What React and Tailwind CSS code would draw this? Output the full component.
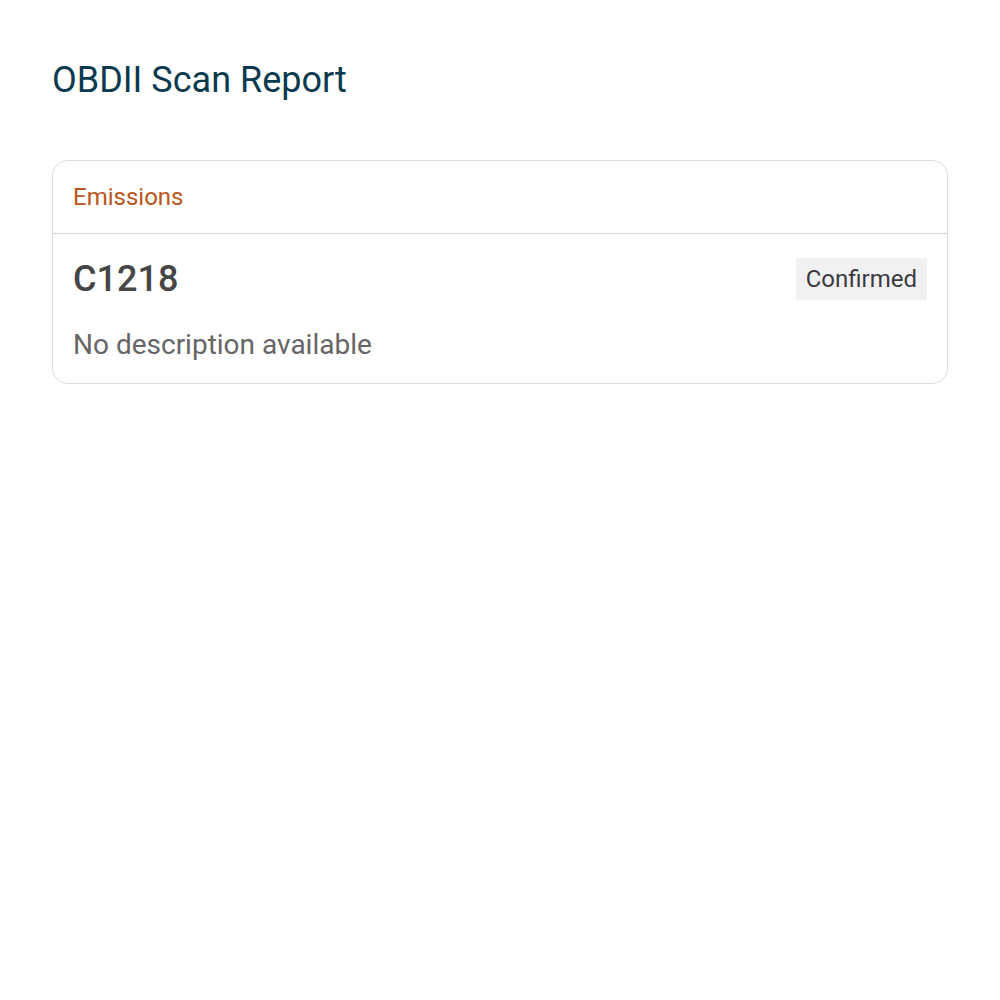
import React from "react";

const App = () => {
  return (
    <div className="min-h-screen w-full bg-white px-[52px] pt-[58px] font-['Roboto',sans-serif]">
      {/* Page title */}
      <h1 className="text-[36px] leading-[44px] text-[#0b3a4f]">OBDII Scan Report</h1>

      {/* Category card */}
      <div className="mt-[58px] rounded-[16px] border border-[#dcdcdc] bg-white">
        <div className="flex h-[73px] items-center border-b border-[#d4d4d4] px-[20px]">
          <span className="text-[24px] text-[#b9561c]">Emissions</span>
        </div>
        <div className="px-[20px] pt-[24px] pb-[22px]">
          <div className="flex h-[42px] items-center justify-between">
            <span className="text-[36px] font-medium leading-[42px] text-[#464646]">C1218</span>
            <span className="bg-[#f1f1f4] px-[10px] py-[7px] text-[24px] leading-[28px] text-[#3b3b3f]">Confirmed</span>
          </div>
          <p className="mt-[29px] text-[28px] leading-[32px] text-[#666666]">No description available</p>
        </div>
      </div>
    </div>
  );
};

export default App;
